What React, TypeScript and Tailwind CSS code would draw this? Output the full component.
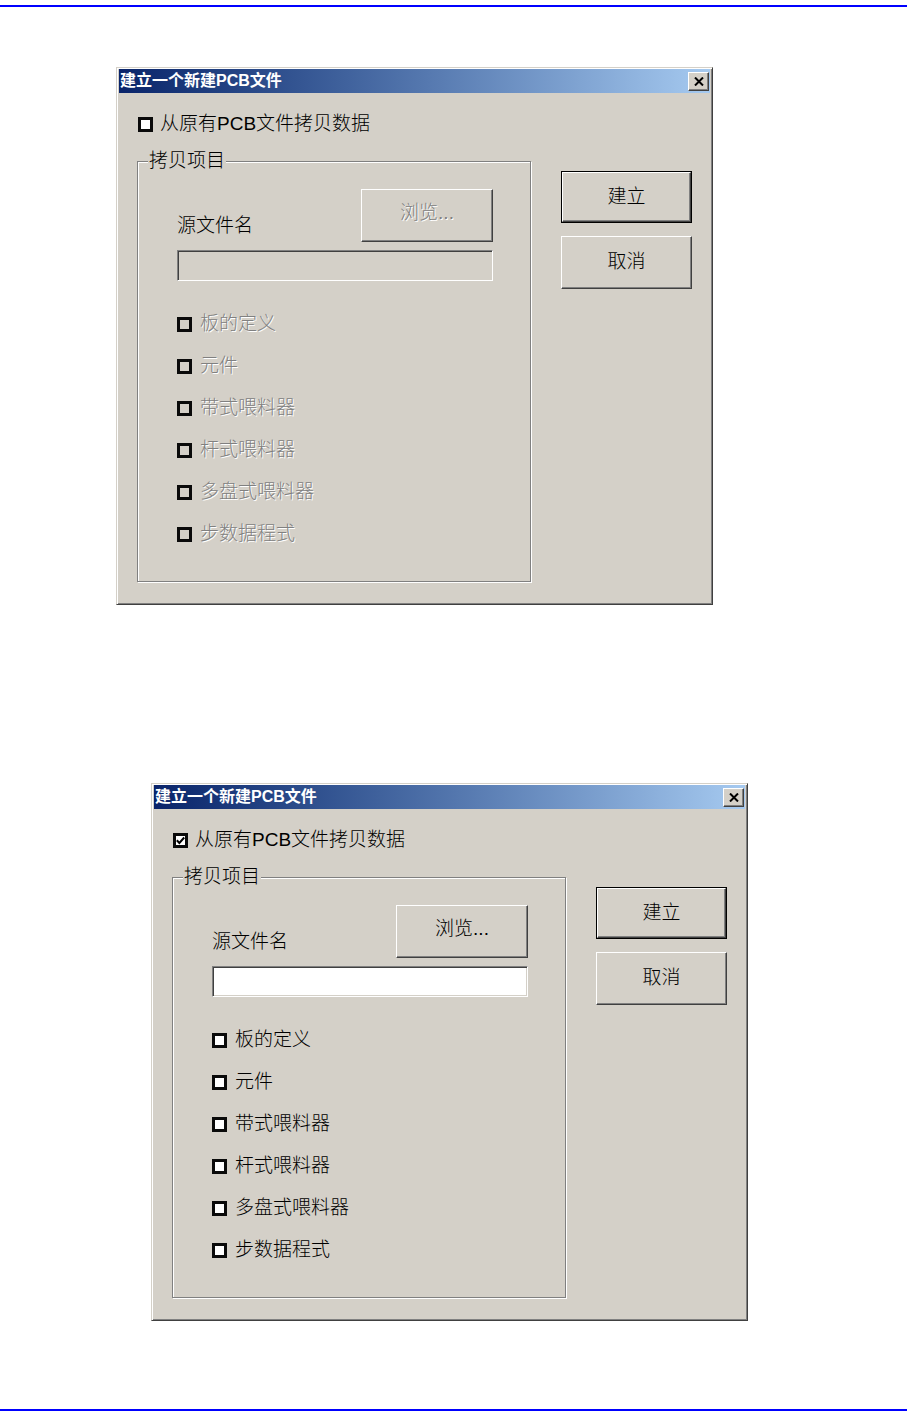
import React from 'react';
import clsx from 'clsx';

const raised =
    'bg-[#d4d0c8] border border-t-white border-l-white border-r-[#404040] border-b-[#404040] shadow-[inset_-1px_-1px_0_#808080]';
const sunken =
    'border border-t-[#808080] border-l-[#808080] border-r-white border-b-white shadow-[inset_1px_1px_0_#404040,inset_-1px_-1px_0_#d4d0c8]';

const CheckBox = ({ checked, enabled }: { checked?: boolean; enabled: boolean }) => (
    <span
        className={clsx(
            'w-[15px] h-[15px] shrink-0 border-[3px] border-[#0a0a0a] flex items-center justify-center',
            enabled ? 'bg-white' : 'bg-[#d4d0c8]'
        )}
    >
        {checked && (
            <svg width="9" height="9" viewBox="0 0 9 9">
                <polyline points="0.8,4.2 3.4,7 8.2,1.5" fill="none" stroke="#000" strokeWidth="2" />
            </svg>
        )}
    </span>
);

const items = ['板的定义', '元件', '带式喂料器', '杆式喂料器', '多盘式喂料器', '步数据程式'];

const Dialog = ({ enabled, className }: { enabled: boolean; className: string }) => {
    // greyed, embossed text when the copy option is off
    const dim = enabled ? 'text-black' : 'text-[#808080] [text-shadow:1px_1px_0_#fff]';

    return (
        <div
            className={clsx(
                "w-[597px] h-[538px] shrink-0 bg-[#d4d0c8] border border-t-[#d4d0c8] border-l-[#d4d0c8] border-r-[#404040] border-b-[#404040] shadow-[inset_1px_1px_0_#fff,inset_-1px_-1px_0_#808080] px-[2px] pt-[1px] font-['Liberation_Sans','Noto_Sans_CJK_SC',sans-serif] font-light text-[19px] text-black",
                className
            )}
        >
            {/* Title bar */}
            <div className="flex items-center h-[24px] pl-[1px] pr-[1px] bg-linear-to-r from-[#0a246a] to-[#a6caf0]">
                <span className="text-white font-bold text-[16px] leading-none">建立一个新建PCB文件</span>
                <div className={clsx(raised, 'ml-auto w-[21px] h-[19px] flex items-center justify-center')}>
                    <svg width="10" height="9" viewBox="0 0 10 9">
                        <path d="M1 0.5 L9 8.5 M9 0.5 L1 8.5" stroke="#000" strokeWidth="2" />
                    </svg>
                </div>
            </div>

            <div className="pl-[18px]">
                <label className="ml-[1px] mt-[19px] h-[24px] flex items-center gap-[7px] leading-[24px]">
                    <CheckBox enabled checked={enabled} />
                    <span>从原有PCB文件拷贝数据</span>
                </label>

                <div className="flex mt-[25px]">
                    {/* Copy items group */}
                    <div className="relative w-[394px] h-[421px] border border-[#808080] shadow-[inset_1px_1px_0_#fff,1px_1px_0_#fff] pl-[39px] pt-[27px]">
                        <span className="absolute -top-[13px] left-[10px] px-[1px] bg-[#d4d0c8] leading-[24px]">拷贝项目</span>

                        <div className="flex items-end justify-between w-[316px]">
                            <span className="mb-[4px] leading-[24px]">源文件名</span>
                            <div className={clsx(raised, 'w-[132px] h-[53px] flex items-center justify-center pb-[4px]')}>
                                <span className={dim}>浏览...</span>
                            </div>
                        </div>

                        <div className={clsx(sunken, 'mt-[8px] w-[316px] h-[31px]', enabled ? 'bg-white' : 'bg-[#d4d0c8]')} />

                        <div className="mt-[31px] flex flex-col gap-[18px]">
                            {items.map((t) => (
                                <label key={t} className="h-[24px] flex items-center gap-[8px] leading-[24px]">
                                    <CheckBox enabled={enabled} />
                                    <span className={dim}>{t}</span>
                                </label>
                            ))}
                        </div>
                    </div>

                    {/* Action buttons */}
                    <div className="ml-[30px] pt-[10px] flex flex-col gap-[13px]">
                        <div className="w-[131px] h-[52px] border border-black flex">
                            <div className={clsx(raised, 'flex-1 flex items-center justify-center')}>建立</div>
                        </div>
                        <div className={clsx(raised, 'w-[131px] h-[53px] flex items-center justify-center')}>取消</div>
                    </div>
                </div>
            </div>
        </div>
    );
};

export default function App() {
    return (
        <div className="w-[907px] h-[1421px] bg-white flex flex-col overflow-hidden">
            <div className="mt-[5px] h-[2px] w-full bg-[#0000ff] shrink-0" />
            <Dialog enabled={false} className="mt-[60px] ml-[116px]" />
            <Dialog enabled className="mt-[178px] ml-[151px]" />
            <div className="mt-[88px] h-[2px] w-full bg-[#0000ff] shrink-0" />
        </div>
    );
}
